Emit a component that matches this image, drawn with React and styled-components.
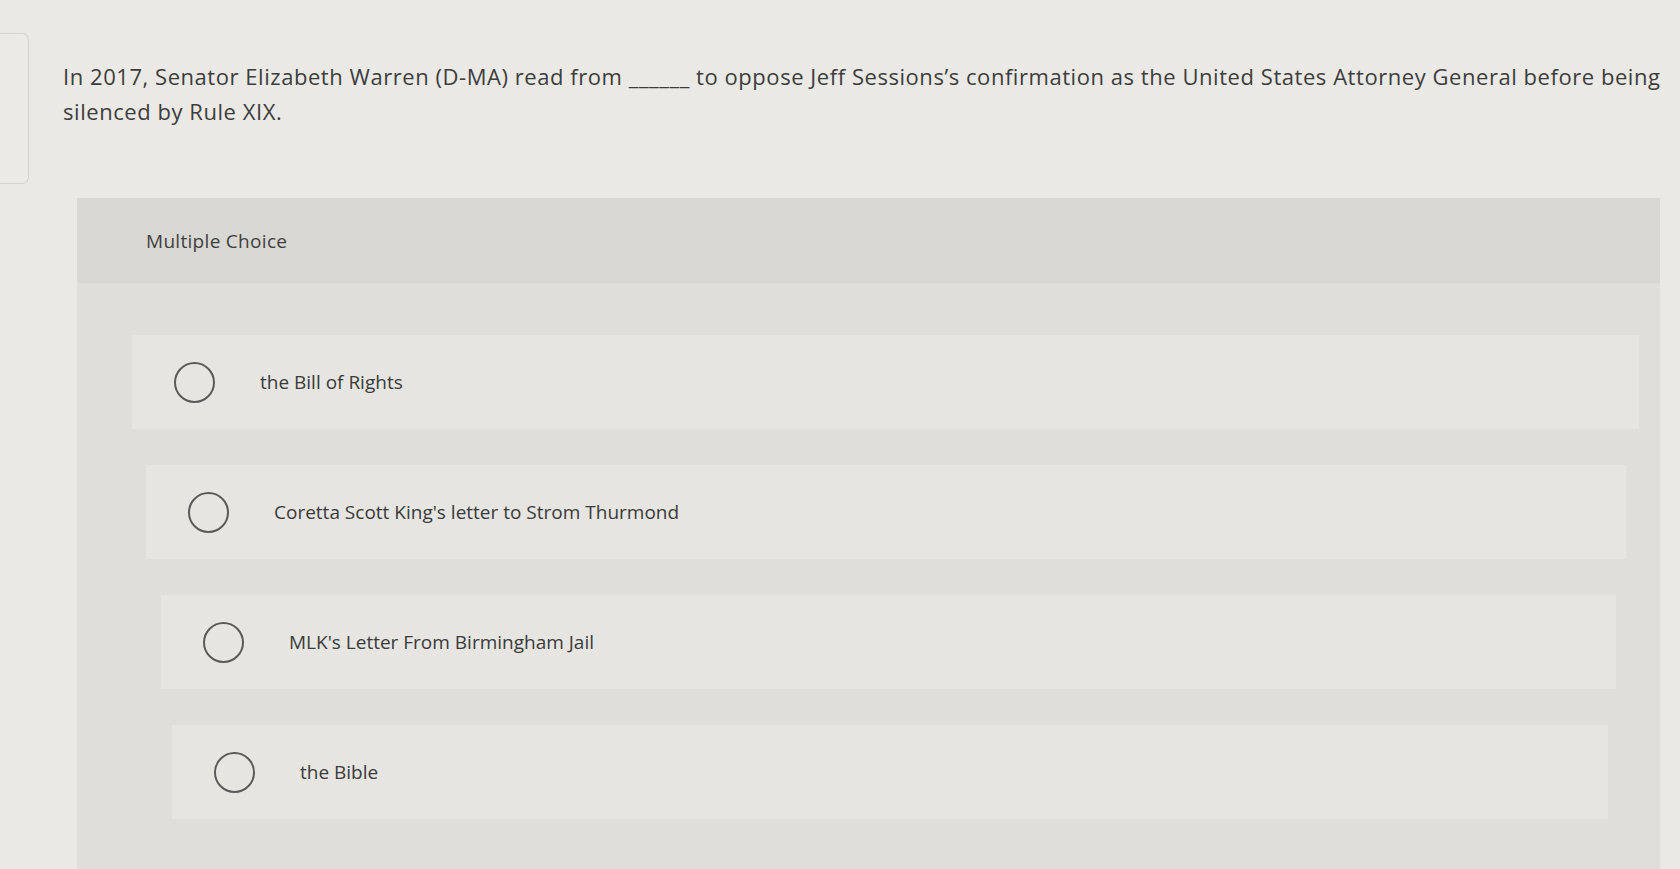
import React from "react";
import styled, { createGlobalStyle } from "styled-components";

const GlobalStyle = createGlobalStyle`
  html, body {
    margin: 0;
    padding: 0;
    background: #eae9e5;
    font-family: "Open Sans", Lato, sans-serif;
    color: #3b3b3b;
  }
  #root {
    min-height: 869px;
    overflow: hidden;
  }
`;

const Page = styled.div`
  height: 869px;
  display: flex;
  flex-direction: column;
  background: #eae9e5;
  overflow: hidden;
`;

const Top = styled.div`
  display: flex;
  align-items: flex-start;
  padding-top: 33px;
  height: 198px;
  box-sizing: border-box;
  flex-shrink: 0;
`;

const Stub = styled.div`
  width: 28px;
  height: 149px;
  border: 1px solid #d3d2ce;
  border-left: none;
  border-radius: 0 7px 7px 0;
  background: #ebeae6;
  flex-shrink: 0;
`;

const Question = styled.p`
  margin: 26px 0 0 34px;
  width: 1614px;
  font-size: 22px;
  letter-spacing: 0.55px;
  line-height: 35px;
  color: #3d3d3d;
`;

const Panel = styled.section`
  flex: 1;
  margin-left: 77px;
  margin-right: 20px;
  background: #dfdeda;
  display: flex;
  flex-direction: column;
`;

const PanelHead = styled.div`
  height: 85px;
  background: #d8d7d3;
  display: flex;
  align-items: center;
  padding-left: 69px;
  font-size: 19px;
  letter-spacing: 0.3px;
  color: #3f3f3f;
`;

const Options = styled.div`
  display: flex;
  flex-direction: column;
  gap: 36px;
  padding: 52px 0 0;
`;

const Option = styled.label`
  height: 94px;
  margin-left: ${(p) => p.indent}px;
  margin-right: ${(p) => p.right}px;
  background: #e6e5e1;
  display: flex;
  align-items: center;
  padding-left: 42px;
  cursor: pointer;
`;

const Radio = styled.span`
  width: 41px;
  height: 41px;
  border: 2px solid #5a5a5a;
  border-radius: 50%;
  box-sizing: border-box;
  flex-shrink: 0;
`;

const OptionText = styled.span`
  margin-left: 45px;
  font-size: 19px;
  color: #3a3a3a;
`;

const choices = [
  { text: "the Bill of Rights", indent: 55, right: 21 },
  { text: "Coretta Scott King's letter to Strom Thurmond", indent: 69, right: 34 },
  { text: "MLK's Letter From Birmingham Jail", indent: 84, right: 44 },
  { text: "the Bible", indent: 95, right: 52 },
];

const App = () => {
  return (
    <Page>
      <GlobalStyle />
      <Top>
        <Stub />
        <Question>
          In 2017, Senator Elizabeth Warren (D-MA) read from ______ to oppose Jeff
          Sessions’s confirmation as the United States Attorney General before being
          silenced by Rule XIX.
        </Question>
      </Top>
      <Panel>
        <PanelHead>Multiple Choice</PanelHead>
        <Options>
          {choices.map((c) => (
            <Option key={c.text} indent={c.indent} right={c.right}>
              <Radio />
              <OptionText>{c.text}</OptionText>
            </Option>
          ))}
        </Options>
      </Panel>
    </Page>
  );
};

export default App;
